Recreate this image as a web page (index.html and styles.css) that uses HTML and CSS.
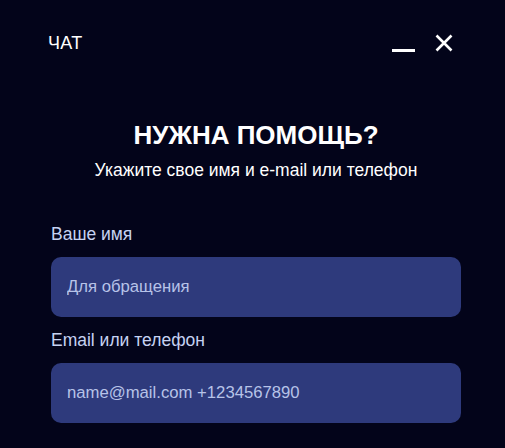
FILE: index.html
```html
<!DOCTYPE html>
<html lang="ru">
<head>
    <meta charset="UTF-8">
    <meta name="viewport" content="width=device-width, initial-scale=1.0">
    <title>Чат</title>
    <link rel="stylesheet" href="styles.css">
</head>
<body>
    <div class="chat">
        <div class="chat-header">
            <span class="chat-title">ЧАТ</span>
            <div class="chat-controls">
                <button class="ctrl ctrl-min" aria-label="Свернуть">
                    <svg width="23" height="3" viewBox="0 0 23 3"><rect width="23" height="3" fill="#ffffff"/></svg>
                </button>
                <button class="ctrl ctrl-close" aria-label="Закрыть">
                    <svg width="18" height="18" viewBox="0 0 18 18"><path d="M1.5 1.5 L16.5 16.5 M16.5 1.5 L1.5 16.5" stroke="#ffffff" stroke-width="2.6" stroke-linecap="butt"/></svg>
                </button>
            </div>
        </div>

        <div class="chat-intro">
            <h1>НУЖНА ПОМОЩЬ?</h1>
            <p>Укажите свое имя и e-mail или телефон</p>
        </div>

        <form class="chat-form">
            <label class="field-label" for="name">Ваше имя</label>
            <input class="field" id="name" type="text" placeholder="Для обращения">
            <label class="field-label" for="contact">Email или телефон</label>
            <input class="field" id="contact" type="text" placeholder="name@mail.com +1234567890">
        </form>
    </div>
</body>
</html>
```

FILE: styles.css
```css
body {
    margin: 0;
    background-color: #03041a;
    color: #ffffff;
    font-family: "Liberation Sans", Arial, sans-serif;
}

.chat {
    padding: 30px 44px 0 51px;
}

.chat-header {
    display: flex;
    justify-content: space-between;
    align-items: center;
    height: 26px;
}

.chat-title {
    margin-left: -3px;
    font-size: 18px;
    letter-spacing: 0.3px;
}

.chat-controls {
    display: flex;
    align-items: center;
    gap: 20px;
    margin-right: 8px;
}

.ctrl {
    padding: 0;
    border: none;
    background: none;
    cursor: pointer;
    display: block;
}

.ctrl svg {
    display: block;
}

.ctrl-min {
    margin-top: 14px;
}

.chat-intro {
    text-align: center;
    margin-top: 65px;
}

.chat-intro h1 {
    margin: 0;
    font-size: 26px;
    line-height: 29px;
    font-weight: bold;
}

.chat-intro p {
    margin: 10px 0 0;
    font-size: 17.5px;
    line-height: 20px;
}

.chat-form {
    display: flex;
    flex-direction: column;
    margin-top: 44px;
}

.field-label {
    color: #c6d2f2;
    font-size: 17.5px;
    line-height: 20px;
    margin-bottom: 13px;
}

.field {
    height: 60px;
    box-sizing: border-box;
    padding: 0 16px;
    border: none;
    border-radius: 10px;
    background-color: #2e3a7c;
    color: #ffffff;
    font-family: inherit;
    font-size: 16.7px;
    outline: none;
    margin-bottom: 13px;
}

.field::placeholder {
    color: #b7c3e8;
}
```
